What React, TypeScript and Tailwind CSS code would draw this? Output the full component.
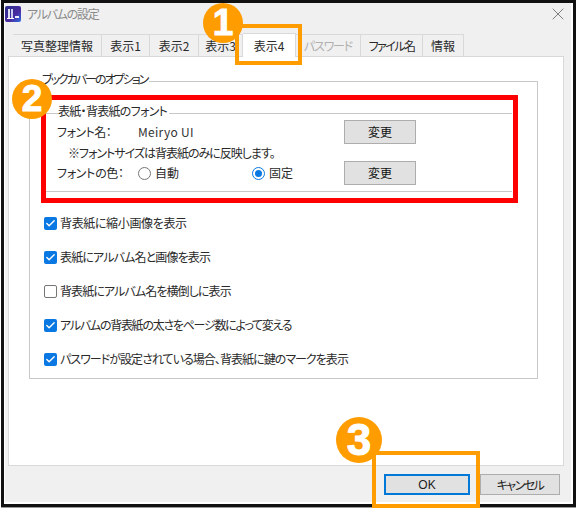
import React from 'react';
import { Check, X } from 'lucide-react';

const font = "[font-family:'Noto_Sans_CJK_JP','Liberation_Sans',sans-serif]";

const tabs = [
  { label: '写真整理情報', w: 'w-[89px]' },
  { label: '表示1', w: 'w-[48px]' },
  { label: '表示2', w: 'w-[49px]' },
  { label: '表示3', w: 'w-[44px]' },
  { label: '表示4', w: 'w-[53px]', active: true },
  { label: 'パスワード', w: 'w-[65px]', disabled: true, track: 'tracking-[-1.2px]' },
  { label: 'ファイル名', w: 'w-[62px]', track: 'tracking-[-1.6px]' },
  { label: '情報', w: 'w-[41px]' },
];

const options = [
  { label: '背表紙に縮小画像を表示', checked: true, track: 'tracking-[-0.36px]' },
  { label: '表紙にアルバム名と画像を表示', checked: true, track: 'tracking-[-0.85px]' },
  { label: '背表紙にアルバム名を横倒しに表示', checked: false, track: 'tracking-[-0.9px]' },
  { label: 'アルバムの背表紙の太さをページ数によって変える', checked: true, track: 'tracking-[-1.26px]' },
  { label: 'パスワードが設定されている場合、背表紙に鍵のマークを表示', checked: true, track: 'tracking-[-0.96px]' },
];

function CheckRow({ label, checked, track }: { label: string; checked: boolean; track: string }) {
  return (
    <div className="flex items-center h-[17px] mb-[17px]">
      {checked ? (
        <span className="w-[13px] h-[13px] rounded-[2px] bg-[#0a78e2] flex items-center justify-center">
          <Check size={11} strokeWidth={3} className="text-white" />
        </span>
      ) : (
        <span className="w-[13px] h-[13px] rounded-[2px] border border-[#767676] bg-white" />
      )}
      <span className={`ml-[3px] -mt-[3px] text-[12px] text-[#2a2a2a] leading-[17px] [font-feature-settings:'palt'] ${track}`}>{label}</span>
    </div>
  );
}

function ChangeButton() {
  return (
    <button className="w-[72px] h-[24px] bg-[#e1e1e1] border border-[#adadad] text-[12px] text-[#111] leading-none">
      変更
    </button>
  );
}

function Badge({ n, className }: { n: number; className: string }) {
  return (
    <div className={`absolute rounded-full bg-[#ff9c00] text-white font-bold flex items-center justify-center [-webkit-text-stroke:1px_white] [font-family:'Liberation_Sans',sans-serif] ${className}`}>
      {n}
    </div>
  );
}

export default function App() {
  return (
    <div className={`relative w-[577px] h-[508px] bg-white overflow-hidden ${font}`}>
      {/* dialog window */}
      <div className="ml-[1px] w-[575px] h-[507px] border-[3px] border-[#111] shadow-[0_1px_0_#999]">
        <div className="h-full border-l border-r-2 border-b-2 border-white bg-[#f0f0f0] flex flex-col">
          <div className="h-[21px] flex items-center pr-[3px] shrink-0">
            <svg width="16" height="16" viewBox="0 0 16 16">
              <defs>
                <linearGradient id="appIcon" x1="0" y1="0" x2="1" y2="1">
                  <stop offset="0" stopColor="#2a2f8a" />
                  <stop offset="0.6" stopColor="#4a2aa0" />
                  <stop offset="1" stopColor="#2f6fe0" />
                </linearGradient>
              </defs>
              <rect width="16" height="16" rx="2" fill="url(#appIcon)" />
              <rect x="3" y="3" width="2" height="9" fill="#dfe2f5" />
              <rect x="6" y="3" width="2" height="9" fill="#c9cdee" />
              <rect x="2" y="12" width="7" height="1" fill="#ffffff" />
              <rect x="10" y="10" width="4" height="2" fill="#e8ecff" />
            </svg>
            <span className="ml-[6px] text-[12px] text-[#8a8a8a] [font-feature-settings:'palt'] tracking-[-1.3px]">アルバムの設定</span>
            <X size={20} strokeWidth={1} className="ml-auto text-[#666]" />
          </div>

          {/* tabs */}
          <div className="flex items-end h-[32px] pl-[8px] shrink-0">
            {tabs.map((t) => (
              <div
                key={t.label}
                className={`${t.w} flex items-center justify-center text-[12px] border-t border-r border-[#d9d9d9] [font-feature-settings:'palt'] ${t.track ?? ''} ${
                  t.active ? 'h-[24px] bg-white relative top-[1px] z-10 -mt-[2px]' : 'h-[22px] bg-[#f0f0f0]'
                } ${t.disabled ? 'text-[#b0b0b0]' : 'text-[#2a2a2a]'}`}
              >
                {t.label}
              </div>
            ))}
          </div>

          {/* tab panel */}
          <div className="ml-[3px] w-[556px] h-[410px] bg-white border border-[#d9d9d9] pl-[20px] pt-[17px] shrink-0">
            <fieldset className="w-[509px] h-[305px] border border-[#c8c8c8] m-0 p-0">
              <legend className="ml-[12px] pr-[2px] text-[12px] text-[#2a2a2a] leading-[14px] -translate-y-[2px] tracking-[-2px] [font-feature-settings:'palt']">
                ブックカバーのオプション
              </legend>
              <div className="pl-[16px]">
                <fieldset className="w-[466px] h-[86px] mt-[18px] border-t border-b border-[#c8c8c8] m-0 p-0">
                  <legend className="ml-[12px] pr-[2px] text-[12px] text-[#2a2a2a] leading-[14px] -translate-y-[2px] tracking-[-0.7px] [font-feature-settings:'palt']">
                    表紙・背表紙のフォント
                  </legend>
                  <div className="flex items-center h-[24px]">
                    <span className="w-[81px] ml-[11px] text-[12px] text-[#2a2a2a] tracking-[-0.5px] [font-feature-settings:'palt']">フォント名：</span>
                    <span className="w-[206px] text-[12px] text-[#333] tracking-[0.3px]">Meiryo UI</span>
                    <ChangeButton />
                  </div>
                  <div className="h-[17px] pl-[22px] flex items-center text-[12px] text-[#2a2a2a] tracking-[-1px] [font-feature-settings:'palt']">
                    ※フォントサイズは背表紙のみに反映します。
                  </div>
                  <div className="flex items-center h-[24px]">
                    <span className="w-[81px] ml-[11px] text-[12px] text-[#2a2a2a] tracking-[-0.3px] [font-feature-settings:'palt']">フォントの色：</span>
                    <span className="w-[13px] h-[13px] rounded-full border border-[#767676] bg-white" />
                    <span className="w-[97px] ml-[4px] text-[12px] text-[#2a2a2a]">自動</span>
                    <span className="w-[13px] h-[13px] rounded-full border border-[#0a78e2] bg-white flex items-center justify-center">
                      <span className="w-[7px] h-[7px] rounded-full bg-[#0a78e2]" />
                    </span>
                    <span className="w-[75px] ml-[4px] text-[12px] text-[#2a2a2a]">固定</span>
                    <ChangeButton />
                  </div>
                </fieldset>
              </div>
              <div className="mt-[23px] pl-[14px]">
                {options.map((o) => (
                  <CheckRow key={o.label} label={o.label} checked={o.checked} track={o.track} />
                ))}
              </div>
            </fieldset>
          </div>

          {/* footer buttons */}
          <div className="flex justify-end mt-[8px] pr-[11px] gap-[10px]">
            <button className="w-[86px] h-[21px] bg-[#e1e1e1] border-2 border-[#0078d7] text-[12px] text-[#222] [font-family:'Liberation_Sans',sans-serif]">OK</button>
            <button className="w-[80px] h-[21px] bg-[#e1e1e1] border border-[#adadad] text-[12px] text-[#222] tracking-[-1.5px] [font-feature-settings:'palt']">キャンセル</button>
          </div>
        </div>
      </div>

      {/* annotations */}
      <div className="absolute left-[41px] top-[95px] w-[477px] h-[108px] border-[5px] border-[#ff0000]" />
      <div className="absolute left-[235px] top-[24px] w-[67px] h-[41px] border-[4px] border-[#ff9c00]" />
      <div className="absolute left-[372px] top-[451px] w-[108px] h-[57px] border-[4px] border-[#ff9c00]" />
      <Badge n={1} className="left-[203px] top-[3px] w-[40px] h-[40px] text-[37px]" />
      <Badge n={2} className="left-[12px] top-[79px] w-[40px] h-[40px] text-[37px]" />
      <Badge n={3} className="left-[336px] top-[417px] w-[46px] h-[46px] text-[44px]" />
    </div>
  );
}
